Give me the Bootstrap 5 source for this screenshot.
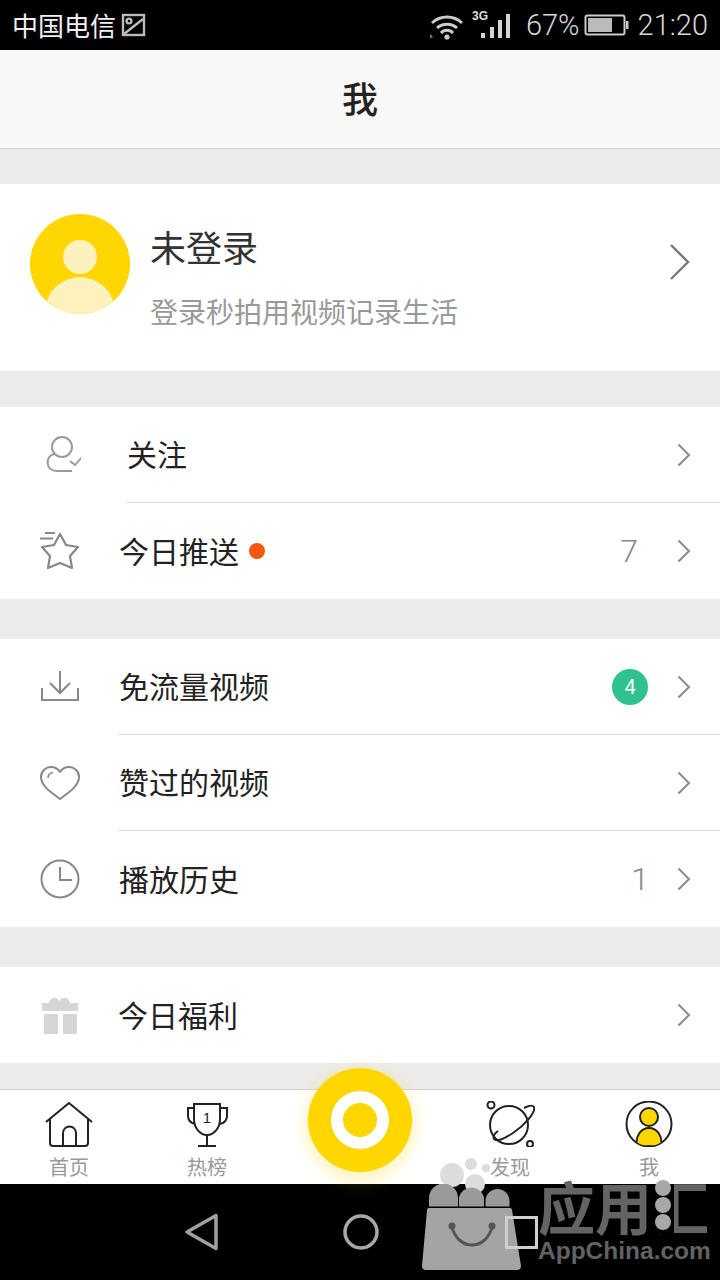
<!DOCTYPE html>
<html lang="zh-CN">
<head>
    <meta charset="UTF-8">
    <meta name="viewport" content="width=device-width, initial-scale=1.0">
    <title>我</title>
    <link href="https://cdn.jsdelivr.net/npm/bootstrap@5.3.0/dist/css/bootstrap.min.css" rel="stylesheet">
    <style>
        html, body { margin: 0; background: #ebebeb; }
        body { font-family: "Noto Sans CJK SC", "Liberation Sans", sans-serif; color: #222; }
        .screen { width: 720px; height: 1280px; overflow: hidden; }
        .status-bar { height: 50px; background: #000; color: #e4e4e4; padding: 0 12px; }
        .carrier { font-size: 26px; line-height: 50px; color: #f0f0f0; }
        .status-num { font-family: Roboto, sans-serif; font-weight: 300; color: #d8d8d8; font-size: 29px; line-height: 50px; }
        .gap-14 { margin-left: 14px; }
        .top-title { height: 99px; background: #f8f8f8; border-bottom: 1px solid #d6d6d6; font-size: 36px; font-weight: 500; padding-bottom: 4px; }
        .band { background: #ebebeb; }
        .band-36 { height: 35px; }
        .band-36b { height: 36px; }
        .band-40 { height: 40px; }
        .band-26 { height: 26px; }
        .profile { height: 187px; background: #fff; padding: 30px 29px 0 30px; }
        .profile-name { font-size: 36px; line-height: 50px; color: #333; }
        .profile-sub { font-size: 28px; line-height: 40px; color: #999; margin-top: 20px; }
        .profile-text { margin-left: 20px; margin-top: 7px; }
        .profile-arrow { margin-top: 29px; }
        .menu-row { height: 96px; background: #fff; }
        .menu-icon { width: 119px; flex: none; }
        .menu-body { height: 96px; padding-right: 29px; font-size: 30px; color: #222; }
        .row-label { margin-top: -2px; }
        .has-line { border-bottom: 1px solid #d9d9d9; }
        .shift-8 { margin-left: 8px; }
        .shift-back { margin-left: -1px; }
        .menu-count { font-family: Roboto, sans-serif; font-weight: 300; font-size: 32px; color: #888; }
        .count-7 { margin-right: 39px; }
        .count-1 { margin-right: 28px; }
        .dot-new { width: 16px; height: 16px; border-radius: 50%; background: #f4580f; margin-left: 10px; }
        .pill-green { width: 36px; height: 36px; border-radius: 50%; background: #2fc28f; color: #fff; font-family: Roboto, sans-serif; font-size: 20px; margin-right: 29px; }
        .tab-bar { height: 95px; background: #fff; border-top: 1px solid #cfcfcf; }
        .tab-item { flex: none; font-size: 20px; line-height: 26px; color: #999; padding-top: 11px; }
        .tab-label { margin-top: 7px; }
        .w-138 { width: 138px; }
        .w-168 { width: 168px; flex: none; }
        .w-132 { width: 132px; }
        .w-146 { width: 146px; }
        .record-btn { position: absolute; left: 308px; top: 1068px; width: 104px; height: 104px; border-radius: 50%; background: #ffd600; box-shadow: 0 5px 18px rgba(255, 214, 0, .4); }
        .record-ring { width: 58px; height: 58px; border-radius: 50%; background: #fff; }
        .record-core { width: 34px; height: 34px; border-radius: 50%; background: #ffd600; }
        .nav-keys { height: 96px; background: #000; }
        .mark-art { position: absolute; left: 0; top: 0; }
        .mark-cn { position: absolute; left: 538px; top: 1180px; font-size: 57px; line-height: 50px; font-weight: 700; color: #646464; white-space: nowrap; }
        .mark-en { position: absolute; left: 538px; top: 1236px; font-family: "Liberation Sans", sans-serif; font-size: 24.5px; line-height: 30px; font-weight: 700; color: #626262; white-space: nowrap; }
    </style>
</head>
<body>
    <div class="screen position-relative d-flex flex-column">
        <!-- status bar -->
        <div class="status-bar d-flex align-items-center">
            <span class="carrier">中国电信</span>
            <svg class="ms-1" width="26" height="24" viewBox="121 14 26 24" fill="none" stroke="#bbb" stroke-width="2.4">
                <rect x="124" y="16" width="21" height="20"/>
                <path d="M125 35 144 20"/>
                <circle cx="130" cy="22" r="2.4"/>
            </svg>
            <svg class="ms-auto" width="84" height="32" viewBox="428 8 84 32" fill="none">
                <path d="M432 22a22 22 0 0 1 30 0M437 27a15 15 0 0 1 20 0M441 32a8 8 0 0 1 12 0" stroke="#ccc" stroke-width="3"/>
                <circle cx="447" cy="36" r="2.6" fill="#ccc"/>
                <path d="M430 33v5l3-2.500z" fill="#777"/>
                <text x="472" y="19" font-family="Liberation Sans" font-size="12" font-weight="700" fill="#ddd">3G</text>
                <path d="M481 32h4v5h-4zM490 26h4v11h-4zM498 19h4v18h-4zM506 13h4v24h-4z" fill="#d4d4d4"/>
            </svg>
            <span class="status-num gap-14">67%</span>
            <svg class="ms-1" width="46" height="22" viewBox="584 14 46 22" fill="none">
                <rect x="585.500" y="15.500" width="39" height="19" rx="2" stroke="#ccc" stroke-width="2"/>
                <rect x="588" y="18" width="24" height="14" fill="#bbb"/>
                <rect x="626" y="21" width="2.500" height="8" fill="#ccc"/>
            </svg>
            <span class="status-num ms-2">21:20</span>
        </div>

        <div class="top-title d-flex align-items-center justify-content-center">我</div>
        <div class="band band-36"></div>

        <!-- profile -->
        <div class="profile d-flex align-items-start">
            <svg width="100" height="100" viewBox="30 214 100 100">
                <defs><clipPath id="avatarClip"><circle cx="80" cy="264" r="50"/></clipPath></defs>
                <circle cx="80" cy="264" r="50" fill="#ffd600"/>
                <circle cx="80" cy="257" r="17" fill="#fdf1bd"/>
                <ellipse cx="80" cy="312" rx="35" ry="35" fill="#fdf1bd" clip-path="url(#avatarClip)"/>
            </svg>
            <div class="profile-text flex-grow-1">
                <div class="profile-name">未登录</div>
                <div class="profile-sub">登录秒拍用视频记录生活</div>
            </div>
            <svg class="profile-arrow" width="22" height="38" viewBox="0 0 22 38" fill="none" stroke="#777" stroke-width="2.400"><path d="M2 2 19 19 2 36"/></svg>
        </div>
        <div class="band band-36b"></div>

        <!-- follow / push -->
        <div class="menu-row d-flex">
            <div class="menu-icon d-flex align-items-center justify-content-center">
                <svg width="42" height="40" viewBox="39 435 42 40" fill="none" stroke="#999" stroke-width="2">
                    <circle cx="62" cy="447" r="10"/>
                    <path d="M72 471H57c-12 0-12-15-3-17"/>
                    <path d="M70 461l5 4 7-8" stroke-width="1.800"/>
                </svg>
            </div>
            <div class="menu-body has-line shift-8 flex-grow-1 d-flex align-items-center">
                <span class="row-label flex-grow-1">关注</span>
                <svg width="14" height="24" viewBox="0 0 14 24" fill="none" stroke="#8a8a8a" stroke-width="2"><path d="M1.500 1.500 12 12 1.500 22.500"/></svg>
            </div>
        </div>
        <div class="menu-row d-flex">
            <div class="menu-icon d-flex align-items-center justify-content-center">
                <svg width="42" height="42" viewBox="39 529 42 42" fill="none" stroke="#888" stroke-width="2.200">
                    <path d="M60 533l6 11 12 2-8 9 2 12-12-5-12 5 2-12-8-9 12-2z" stroke-linejoin="round"/>
                    <path d="M40 537.500h13M45 532h10"/>
                </svg>
            </div>
            <div class="menu-body flex-grow-1 d-flex align-items-center">
                <span class="row-label">今日推送</span>
                <span class="dot-new"></span>
                <span class="menu-count count-7 ms-auto">7</span>
                <svg width="14" height="24" viewBox="0 0 14 24" fill="none" stroke="#8a8a8a" stroke-width="2"><path d="M1.500 1.500 12 12 1.500 22.500"/></svg>
            </div>
        </div>
        <div class="band band-40"></div>

        <!-- videos -->
        <div class="menu-row d-flex">
            <div class="menu-icon d-flex align-items-center justify-content-center">
                <svg width="40" height="36" viewBox="40 670 40 36" fill="none" stroke="#888" stroke-width="2">
                    <path d="M60 672v22M50 684l10 10 10-10"/>
                    <path d="M42 689v12h36v-12"/>
                </svg>
            </div>
            <div class="menu-body has-line flex-grow-1 d-flex align-items-center">
                <span class="row-label">免流量视频</span>
                <span class="pill-green ms-auto d-flex align-items-center justify-content-center">4</span>
                <svg width="14" height="24" viewBox="0 0 14 24" fill="none" stroke="#8a8a8a" stroke-width="2"><path d="M1.500 1.500 12 12 1.500 22.500"/></svg>
            </div>
        </div>
        <div class="menu-row d-flex">
            <div class="menu-icon d-flex align-items-center justify-content-center">
                <svg width="42" height="36" viewBox="39 764 42 36" fill="none" stroke="#888" stroke-width="2">
                    <path d="M60 798c-6-5-19-12-19-22 0-6 5-10 10-10 4 0 7 2 9 5 2-3 5-5 9-5 5 0 10 4 10 10 0 10-13 17-19 22z" stroke-linejoin="round"/>
                    <path d="M48 777c0-3 2-5 5-5.500" stroke-width="1.600"/>
                </svg>
            </div>
            <div class="menu-body has-line flex-grow-1 d-flex align-items-center">
                <span class="row-label flex-grow-1">赞过的视频</span>
                <svg width="14" height="24" viewBox="0 0 14 24" fill="none" stroke="#8a8a8a" stroke-width="2"><path d="M1.500 1.500 12 12 1.500 22.500"/></svg>
            </div>
        </div>
        <div class="menu-row d-flex">
            <div class="menu-icon d-flex align-items-center justify-content-center">
                <svg width="40" height="40" viewBox="40 859 40 40" fill="none" stroke="#888" stroke-width="2">
                    <circle cx="60" cy="879" r="18.500"/>
                    <path d="M60 867v13h12"/>
                </svg>
            </div>
            <div class="menu-body flex-grow-1 d-flex align-items-center">
                <span class="row-label">播放历史</span>
                <span class="menu-count count-1 ms-auto">1</span>
                <svg width="14" height="24" viewBox="0 0 14 24" fill="none" stroke="#8a8a8a" stroke-width="2"><path d="M1.500 1.500 12 12 1.500 22.500"/></svg>
            </div>
        </div>
        <div class="band band-40"></div>

        <!-- gift -->
        <div class="menu-row d-flex">
            <div class="menu-icon d-flex align-items-center justify-content-center">
                <svg width="38" height="38" viewBox="40 996 38 38" fill="#d6d6d6">
                    <path d="M41 1003h7c1-5 7-8 10-2 4-6 10-3 11 2h8v8H41z"/>
                    <rect x="43" y="1014" width="14" height="20" rx="1"/>
                    <rect x="62" y="1014" width="14" height="20" rx="1"/>
                </svg>
            </div>
            <div class="menu-body flex-grow-1 d-flex align-items-center">
                <span class="row-label shift-back flex-grow-1">今日福利</span>
                <svg width="14" height="24" viewBox="0 0 14 24" fill="none" stroke="#8a8a8a" stroke-width="2"><path d="M1.500 1.500 12 12 1.500 22.500"/></svg>
            </div>
        </div>
        <div class="band band-26"></div>

        <!-- tab bar -->
        <div class="tab-bar d-flex">
            <div class="tab-item w-138 d-flex flex-column align-items-center">
                <svg width="48" height="46" viewBox="45 1101 48 46" fill="none" stroke="#222" stroke-width="2">
                    <path d="M46 1122 69 1103l23 19"/>
                    <path d="M50 1118v25a3 3 0 0 0 3 3h32a3 3 0 0 0 3-3v-25"/>
                    <path d="M63 1146v-13a6.500 6.500 0 0 1 13 0v13"/>
                </svg>
                <span class="tab-label">首页</span>
            </div>
            <div class="tab-item w-138 d-flex flex-column align-items-center">
                <svg width="44" height="46" viewBox="185 1102 44 46" fill="none" stroke="#222" stroke-width="2">
                    <path d="M194 1105h26v15c0 9-6 16-13 16s-13-7-13-16z"/>
                    <path d="M194 1109h-6v8c0 4 3 7 7 8M220 1109h7v8c0 4-3 7-7 8"/>
                    <path d="M207 1136v10M198 1147h18"/>
                    <text x="207" y="1124" text-anchor="middle" font-family="Liberation Sans" font-size="15" fill="#222" stroke="none">1</text>
                </svg>
                <span class="tab-label">热榜</span>
            </div>
            <div class="w-168"></div>
            <div class="tab-item w-132 d-flex flex-column align-items-center">
                <svg width="50" height="46" viewBox="486 1101 50 46" fill="none" stroke="#222" stroke-width="2">
                    <circle cx="510" cy="1125" r="19"/>
                    <path d="M525 1108c6-3 9-3 10-1 2 5-9 18-21 26-9 6-17 9-19 6-1-2 0-5 4-8"/>
                    <circle cx="492" cy="1105" r="3.500"/>
                    <circle cx="531" cy="1144" r="3"/>
                </svg>
                <span class="tab-label">发现</span>
            </div>
            <div class="tab-item w-146 d-flex flex-column align-items-center">
                <svg width="48" height="46" viewBox="626 1101 48 46" stroke="#222" stroke-width="2">
                    <defs><clipPath id="meClip"><circle cx="650" cy="1124" r="22"/></clipPath></defs>
                    <circle cx="650" cy="1124" r="22.500" fill="#fff"/>
                    <path d="M638 1146c-2-10 4-18 12-18s14 8 12 18z" fill="#ffd600" clip-path="url(#meClip)"/>
                    <circle cx="650" cy="1117" r="9" fill="#ffd600"/>
                </svg>
                <span class="tab-label">我</span>
            </div>
        </div>

        <!-- android keys -->
        <div class="nav-keys d-flex">
        </div>

        <div class="record-btn d-flex align-items-center justify-content-center">
            <div class="record-ring d-flex align-items-center justify-content-center">
                <div class="record-core"></div>
            </div>
        </div>

        <!-- keys and watermark sit over the bars -->
        <svg class="mark-art" width="720" height="1280" viewBox="0 0 720 1280" fill="none">
            <defs><clipPath id="ballClip"><rect x="420" y="1184" width="100" height="22.500"/></clipPath></defs>
            <path d="M216 1215.500v33l-29-16.500z" stroke="#a0a0a0" stroke-width="3.500" stroke-linejoin="round"/>
            <circle cx="361" cy="1232" r="16" stroke="#a8a8a8" stroke-width="3.500"/>
            <circle cx="452" cy="1175" r="12" fill="#dcdcdc"/>
            <circle cx="471" cy="1164" r="6" fill="#dcdcdc"/>
            <circle cx="486" cy="1168" r="4" fill="#dcdcdc"/>
            <circle cx="475" cy="1184" r="10" fill="#dcdcdc"/>
            <g clip-path="url(#ballClip)" fill="#9a9a9a">
                <path d="M429 1207v-9a14.500 14.500 0 0 1 29 0v9z"/>
                <path d="M459 1207v-10a13 13 0 0 1 25 0v10z"/>
                <path d="M485.500 1207v-6a12 12 0 0 1 24 0v6z"/>
            </g>
            <path d="M429 1208h81a2 2 0 0 1 2 2l9 56a4 4 0 0 1-4 4H426a4 4 0 0 1-4-4l5-56a2 2 0 0 1 2-2z" fill="#a4a4a4"/>
            <path d="M452 1227c6 24 34 24 40 0" stroke="#555" stroke-width="3"/>
            <circle cx="452" cy="1226" r="3.500" fill="#555"/>
            <circle cx="492" cy="1226" r="3.500" fill="#555"/>
            <rect x="506.500" y="1217.500" width="30" height="30" stroke="#cfcfcf" stroke-width="3"/>
        </svg>
        <div class="mark-cn">应用汇</div>
        <svg class="mark-art" width="720" height="1280" viewBox="0 0 720 1280">
            <rect x="652" y="1184" width="22" height="50" fill="#000"/>
            <circle cx="663" cy="1188" r="8" fill="#a8a8a8"/>
            <circle cx="663" cy="1205" r="8" fill="#a8a8a8"/>
            <circle cx="663" cy="1222" r="8" fill="#a8a8a8"/>
        </svg>
        <div class="mark-en">AppChina.com</div>
    </div>
    <script src="https://cdn.jsdelivr.net/npm/bootstrap@5.3.0/dist/js/bootstrap.bundle.min.js"></script>
</body>
</html>
